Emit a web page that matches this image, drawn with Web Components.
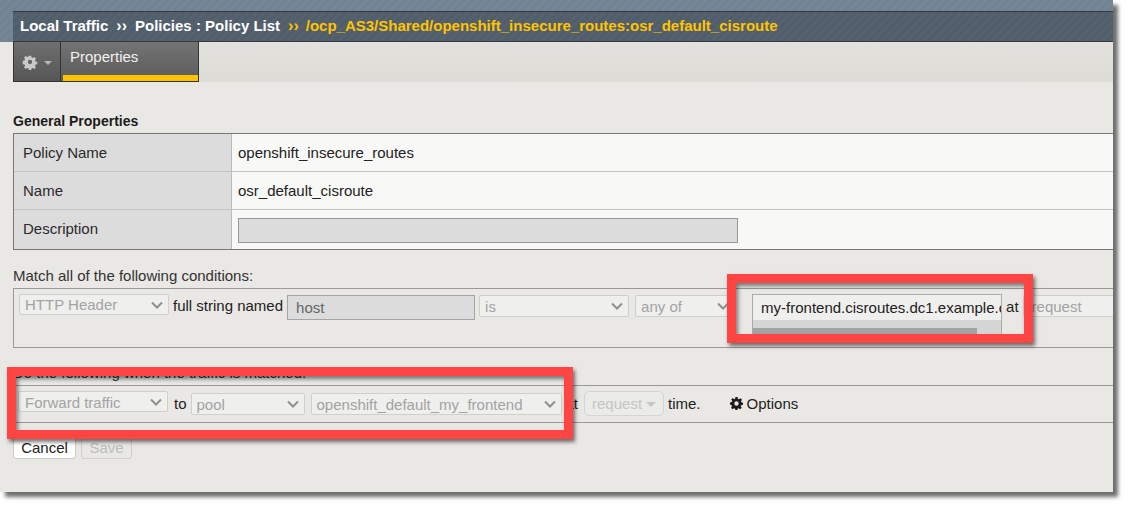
<!DOCTYPE html>
<html>
<head>
<meta charset="utf-8">
<title>Policy properties</title>
<style>
  html, body { margin: 0; background: #fff; }
  body { font: 15px "Liberation Sans", Arial, sans-serif; color: #222; width: 1128px; height: 507px; overflow: hidden; }
</style>
</head>
<body>
<policy-screen>
  <crumb-bar></crumb-bar>
  <tab-strip></tab-strip>
  <general-props></general-props>
  <cond-row></cond-row>
  <action-row></action-row>
  <form-buttons></form-buttons>
  <red-box style="left:727px;top:274px;width:306px;height:69px"></red-box>
  <red-box style="left:7px;top:367px;width:566px;height:72px"></red-box>
</policy-screen>

<script>
class PolicyScreen extends HTMLElement {
  constructor() {
    super();
    this.attachShadow({ mode: "open" });
    this.shadowRoot.innerHTML = `
      <style>
        :host { display: block; position: relative; width: 1113px; height: 492px; background: #e9e8e4; box-shadow: 5px 5px 4px #6e6e6e; }
        .wrap { display: flex; flex-direction: column; height: 100%; overflow: hidden; }
      </style>
      <div class="wrap"><slot></slot></div>
    `;
  }
}

class CrumbBar extends HTMLElement {
  constructor() {
    super();
    this.attachShadow({ mode: "open" });
    this.shadowRoot.innerHTML = `
      <style>
        :host { display: block; box-sizing: border-box; height: 42px; padding: 11px 0 0 13px;
          background: repeating-linear-gradient(135deg, #73869a 0 3px, #70838f 3px 6px); }
        .bar { box-sizing: border-box; height: 31px; padding: 0 0 2px 7px; display: flex; align-items: center; gap: 8px;
          border-top: 1px solid #33393f; border-bottom: 1px solid #33393f;
          background: repeating-linear-gradient(135deg, #505d6b 0 3px, #55616c 3px 6px);
          color: #fff; font-weight: bold; font-size: 15px; white-space: nowrap; }
        .sep { font-size: 16px; line-height: 17px; }
        .y { color: #ffc400; }
        .path { color: #ffc400; margin-left: -1px; }
      </style>
      <div class="bar">
        <span>Local Traffic</span><span class="sep">››</span><span>Policies : Policy List</span><span class="sep y">››</span><span class="path">/ocp_AS3/Shared/openshift_insecure_routes:osr_default_cisroute</span>
      </div>
    `;
  }
}

class TabStrip extends HTMLElement {
  constructor() {
    super();
    this.attachShadow({ mode: "open" });
    this.shadowRoot.innerHTML = `
      <style>
        :host { display: flex; height: 40px; margin-left: 13px; background: linear-gradient(#e2e1dd, #dddcd7); }
        .gear { box-sizing: border-box; width: 48px; display: flex; align-items: center; padding-left: 8px; gap: 6px;
          background: linear-gradient(#6f6f6f, #565656); border-left: 1px solid #333; border-bottom: 1px solid #333; border-right: 1px solid #333; }
        .caret { width: 0; height: 0; border-left: 4px solid transparent; border-right: 4px solid transparent; border-top: 4px solid #b5b5b5; margin-top: 3px; }
        .tab { box-sizing: border-box; width: 138px; padding: 6px 0 0 9px; color: #f1f1f1; font-size: 15px; line-height: 17px;
          background: linear-gradient(#747474, #5a5a5a); border-right: 1px solid #333; border-bottom: 1px solid #333; position: relative; }
        .tab::after { content: ""; position: absolute; left: 2px; right: 0; bottom: 0; height: 6px; background: #ffc400; }
      </style>
      <div class="gear">
        <svg width="16" height="16" viewBox="0 0 16 16"><path fill="#c9c9c9" fill-rule="evenodd" d="M6.7 1h2.6l.4 2 1.3.6 1.8-1.1 1.8 1.8-1.1 1.8.6 1.3 2 .4v2.6l-2 .4-.6 1.3 1.1 1.8-1.8 1.8-1.8-1.1-1.3.6-.4 2H6.7l-.4-2-1.3-.6-1.8 1.1-1.8-1.8 1.1-1.8-.6-1.3-2-.4V6.7l2-.4.6-1.3-1.1-1.8 1.8-1.8 1.8 1.1 1.3-.6zM8 5.6a2.4 2.4 0 1 0 0 4.8 2.4 2.4 0 0 0 0-4.8z" transform="translate(.8 .8) scale(.9)"/></svg>
        <span class="caret"></span>
      </div>
      <div class="tab">Properties</div>
    `;
  }
}

class GeneralProps extends HTMLElement {
  constructor() {
    super();
    this.attachShadow({ mode: "open" });
    this.shadowRoot.innerHTML = `
      <style>
        :host { display: block; margin: 31px 0 0 13px; }
        h3 { margin: 0; font-size: 14px; line-height: 16px; font-weight: bold; color: #1c1c1c; height: 20px; }
        .tbl { display: grid; grid-template-columns: 218px 1fr; border: 1px solid #777; border-right: 0; }
        .l, .v { box-sizing: border-box; height: 38px; display: flex; align-items: center; font-size: 15px; }
        .l { background: #dcdcdc; padding-left: 9px; border-right: 1px solid #bbb; color: #2a2a2a; }
        .v { background: #f8f8f7; padding-left: 6px; }
        .l.b, .v.b { border-bottom: 1px solid #c4c4c4; }
        .box { width: 500px; height: 25px; box-sizing: border-box; background: #dcdcdc; border: 1px solid #999; margin-top: 1px; }
        .last { height: 39px; }
        .l.last { padding-bottom: 2px; }
      </style>
      <h3>General Properties</h3>
      <div class="tbl">
        <div class="l b">Policy Name</div><div class="v b">openshift_insecure_routes</div>
        <div class="l b">Name</div><div class="v b">osr_default_cisroute</div>
        <div class="l last">Description</div><div class="v last"><div class="box"></div></div>
      </div>
    `;
  }
}

class FakeSelect extends HTMLElement {
  constructor() {
    super();
    this.attachShadow({ mode: "open" });
    this.shadowRoot.innerHTML = `
      <style>
        :host { display: flex; box-sizing: border-box; height: 22px; align-items: center; justify-content: space-between; padding: 0 5px 0 5px;
          border: 1px solid #cfcfcb; border-radius: 2px; background: #efefed; color: #a3a3a3; font-size: 15px; white-space: nowrap; flex: none; }
        :host([short]) { height: 21px; }
        svg { flex: none; }
      </style>
      <slot></slot>
      <svg width="12" height="8" viewBox="0 0 12 8"><path d="M1 1.5l5 5 5-5" fill="none" stroke="#8f8f8f" stroke-width="2"/></svg>
    `;
  }
  connectedCallback() { this.style.width = this.getAttribute("w") + "px"; }
}

class CondRow extends HTMLElement {
  constructor() {
    super();
    this.attachShadow({ mode: "open" });
    this.shadowRoot.innerHTML = `
      <style>
        :host { display: block; margin: 18px 0 0 13px; }
        .cap { font-size: 15px; line-height: 16px; height: 20px; color: #333; }
        .row { box-sizing: border-box; height: 60px; padding: 5px 0 0 5px; display: flex; align-items: flex-start; border: 1px solid #999; border-right: 0; overflow: hidden; color: #222; }
        span { font-size: 15px; line-height: 24px; flex: none; }
        .host { box-sizing: border-box; width: 188px; height: 25px; flex: none; background: #dcdcdc; border: 1px solid #a5a5a5; color: #666; padding: 3px 0 0 8px; margin-top: 1px; }
        .list { box-sizing: border-box; width: 250px; height: 46px; flex: none; background: #efefed; border: 1px solid #aaa; color: #222; overflow: hidden; white-space: nowrap; }
        .txt { padding: 4px 0 0 8px; height: 25px; box-sizing: border-box; }
        .track { height: 20px; background: #d6d6d6; padding-top: 8px; box-sizing: border-box; }
        .thumb { width: 224px; height: 6px; background: #a3a3a3; }
      </style>
      <div class="cap">Match all of the following conditions:</div>
      <div class="row">
        <fake-select w="150" short>HTTP Header</fake-select>
        <span style="margin-left:4px">full string named</span>
        <div class="host" style="margin-left:4px">host</div>
        <fake-select w="150" style="margin:1px 0 0 4px">is</fake-select>
        <fake-select w="100" style="margin:1px 0 0 6px">any of</fake-select>
        <div class="list" style="margin-left:17px"><div class="txt">my-frontend.cisroutes.dc1.example.c</div><div class="track"><div class="thumb"></div></div></div>
        <span style="margin:1px 0 0 4px">at</span>
        <fake-select w="120" style="margin:1px 0 0 4px;padding-left:8px">request</fake-select>
      </div>
    `;
  }
}

class ActionRow extends HTMLElement {
  constructor() {
    super();
    this.attachShadow({ mode: "open" });
    this.shadowRoot.innerHTML = `
      <style>
        :host { display: block; margin: 17px 0 0 13px; }
        .cap { font-size: 15px; line-height: 16px; height: 20px; color: #333; }
        .row { box-sizing: border-box; height: 38px; padding: 5px 0 0 5px; display: flex; align-items: flex-start; border-top: 1px solid #999; border-bottom: 1px solid #999; color: #222; }
        span { font-size: 15px; line-height: 24px; flex: none; margin-top: 1px; }
        .req { box-sizing: border-box; width: 80px; height: 25px; flex: none; display: flex; align-items: center; gap: 4px; padding-left: 7px; border: 1px solid #d4d4d0; border-radius: 5px; background: #ebebe8; color: #c6c6c6; font-size: 15px; }
        .req i { width: 0; height: 0; border-left: 5px solid transparent; border-right: 5px solid transparent; border-top: 5px solid #c6c6c6; margin-top: 2px; }
        .opt { display: flex; align-items: center; gap: 4px; font-size: 15px; height: 24px; margin: 0 0 0 29px; color: #222; }
      </style>
      <div class="cap">Do the following when the traffic is matched:</div>
      <div class="row">
        <fake-select w="150" short style="padding-left:6px;padding-top:1px">Forward traffic</fake-select>
        <span style="margin-left:6px">to</span>
        <fake-select w="114" style="margin:2px 0 0 4px">pool</fake-select>
        <fake-select w="251" style="margin:2px 0 0 6px">openshift_default_my_frontend</fake-select>
        <span style="margin-left:4px">at</span>
        <div class="req" style="margin-left:6px">request<i></i></div>
        <span style="margin-left:4px">time.</span>
        <div class="opt">
          <svg width="13" height="13" viewBox="0 0 16 16"><path fill="#1c1c1c" fill-rule="evenodd" d="M6.7 0h2.6l.4 2.2 1.3.6 1.9-1.3 1.9 1.9-1.3 1.9.6 1.3 1.9.4v2.6l-2.2.4-.6 1.3 1.3 1.9-1.9 1.9-1.9-1.3-1.3.6-.4 2.2H6.7l-.4-2.2-1.3-.6-1.9 1.3-1.9-1.9 1.3-1.9-.6-1.3L0 9.3V6.7l2.2-.4.6-1.3-1.3-1.9 1.9-1.9L5 2.8l1.3-.6zM8 5.3a2.7 2.7 0 1 0 0 5.4 2.7 2.7 0 0 0 0-5.4z"/></svg>
          Options
        </div>
      </div>
    `;
  }
}

class FormButtons extends HTMLElement {
  constructor() {
    super();
    this.attachShadow({ mode: "open" });
    this.shadowRoot.innerHTML = `
      <style>
        :host { display: flex; gap: 5px; margin: 14px 0 0 13px; }
        div { box-sizing: border-box; height: 22px; padding-bottom: 2px; display: flex; align-items: center; justify-content: center; border-radius: 3px; font-size: 15px; }
        .c { width: 63px; background: #fff; border: 1px solid #ccc; color: #222; }
        .s { width: 51px; background: #e9e8e4; border: 1px solid #cfcfcb; color: #bcbcbc; }
      </style>
      <div class="c">Cancel</div><div class="s">Save</div>
    `;
  }
}

// callout rectangles drawn over the screenshot
class RedBox extends HTMLElement {
  constructor() {
    super();
    this.attachShadow({ mode: "open" });
    this.shadowRoot.innerHTML = `
      <style>
        :host { display: block; position: absolute; box-sizing: border-box; border: 9px solid #ff4444;
          box-shadow: 2px 3px 4px rgba(0,0,0,.55), inset 2px 3px 4px rgba(0,0,0,.5); }
      </style>
    `;
  }
}

customElements.define("policy-screen", PolicyScreen);
customElements.define("crumb-bar", CrumbBar);
customElements.define("tab-strip", TabStrip);
customElements.define("general-props", GeneralProps);
customElements.define("fake-select", FakeSelect);
customElements.define("cond-row", CondRow);
customElements.define("action-row", ActionRow);
customElements.define("form-buttons", FormButtons);
customElements.define("red-box", RedBox);
</script>
</body>
</html>
